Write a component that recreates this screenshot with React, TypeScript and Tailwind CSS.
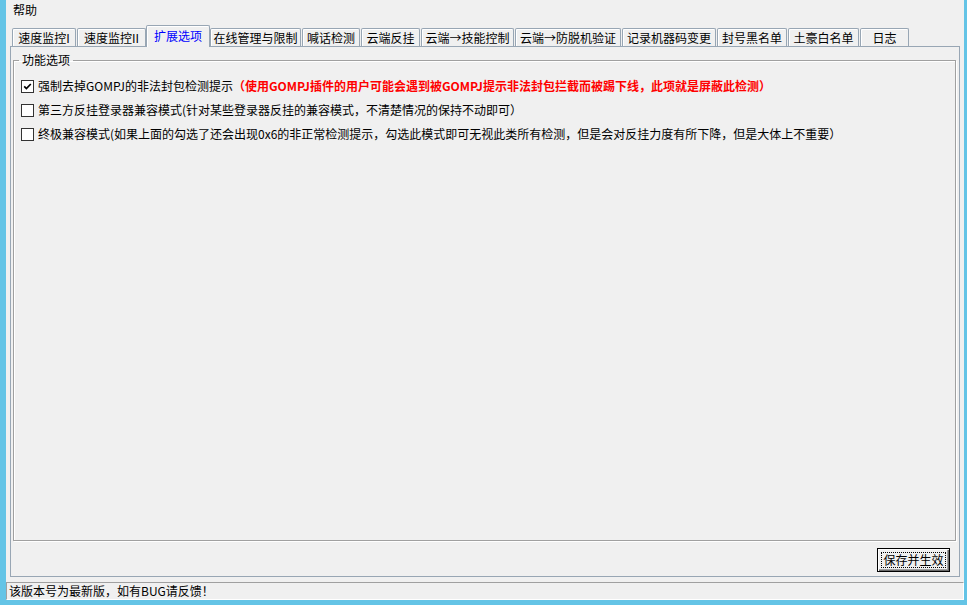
import React from "react";

const FONT = { fontFamily: '"Noto Sans CJK SC", "Noto Sans", sans-serif' };

type Tab = { label: string; cls: string; active?: boolean };

const tabs: Tab[] = [
  { label: "速度监控I", cls: "w-[64px] ml-[6px]" },
  { label: "速度监控II", cls: "w-[69px] ml-[1px]" },
  { label: "扩展选项", cls: "w-[64px] ml-0", active: true },
  { label: "在线管理与限制", cls: "w-[91px] ml-0" },
  { label: "喊话检测", cls: "w-[58px] ml-[1px]" },
  { label: "云端反挂", cls: "w-[59px] ml-[1px]" },
  { label: "云端→技能控制", cls: "w-[93px] ml-[1px]" },
  { label: "云端→防脱机验证", cls: "w-[106px] ml-[1px]" },
  { label: "记录机器码变更", cls: "w-[94px] ml-[1px]" },
  { label: "封号黑名单", cls: "w-[70px] ml-[1px]" },
  { label: "土豪白名单", cls: "w-[71px] ml-[1px]" },
  { label: "日志", cls: "w-[49px] ml-[1px]" },
];

function CheckBox({ checked }: { checked?: boolean }) {
  return (
    <span className="w-[13px] h-[13px] border border-[#333333] bg-white flex items-center justify-center shrink-0">
      {checked && (
        <svg width="11" height="11" viewBox="0 0 11 11">
          <path d="M2.2 5.4 L4.4 7.6 L8.8 3.0" stroke="#000" strokeWidth="1.7" fill="none" />
        </svg>
      )}
    </span>
  );
}

export default function App() {
  return (
    <div
      className="w-[967px] h-[605px] bg-[#64c4e6] pl-[6px] pr-[3px] pb-[5px] overflow-hidden text-[12px] text-black"
      style={FONT}
    >
      <div className="w-full h-full bg-[#f0f0f0] flex flex-col">
        {/* menu */}
        <div className="h-[25px] pl-[7px] pt-[2px] leading-[16px]">帮助</div>

        {/* tabs */}
        <div className="h-[21px] flex items-end relative z-10">
          {tabs.map((t) =>
            t.active ? (
              <div
                key={t.label}
                className={`${t.cls} h-[22px] mb-[-1px] border border-b-0 border-[#98a6b4] rounded-t-[2px] bg-[#f0f0f0] shadow-[inset_1px_1px_0_#ffffff] flex items-center justify-center text-[#0000ff] leading-[14px] pb-[2px]`}
              >
                {t.label}
              </div>
            ) : (
              <div
                key={t.label}
                className={`${t.cls} h-[18px] border border-b-0 border-[#98a6b4] rounded-t-[2px] bg-[#f0f0f0] shadow-[inset_1px_1px_0_#ffffff] flex items-center justify-center leading-[14px] pt-[1px]`}
              >
                {t.label}
              </div>
            )
          )}
        </div>

        {/* panel */}
        <div className="ml-[4px] w-[950px] h-[531px] border border-[#98a6b4] flex flex-col">
          <fieldset className="mt-[5px] ml-[2px] mr-[3px] flex-1 border border-[#a0a0a0] shadow-[inset_1px_1px_0_#ffffff,1px_1px_0_#ffffff] min-h-0">
            <legend className="ml-[5px] px-[3px] leading-[16px]">功能选项</legend>
            <div className="pl-[7px] pt-[6px] flex flex-col">
              <div className="h-[24px] flex items-center gap-[4px]">
                <CheckBox checked />
                <span className="leading-[14px] whitespace-nowrap">
                  强制去掉GOMPJ的非法封包检测提示
                  <span className="text-[#ff0000] font-bold">
                    （使用GOMPJ插件的用户可能会遇到被GOMPJ提示非法封包拦截而被踢下线，此项就是屏蔽此检测）
                  </span>
                </span>
              </div>
              <div className="h-[24px] flex items-center gap-[4px]">
                <CheckBox />
                <span className="leading-[14px] whitespace-nowrap">
                  第三方反挂登录器兼容模式(针对某些登录器反挂的兼容模式，不清楚情况的保持不动即可）
                </span>
              </div>
              <div className="h-[24px] flex items-center gap-[4px]">
                <CheckBox />
                <span className="leading-[14px] whitespace-nowrap">
                  终极兼容模式(如果上面的勾选了还会出现0x6的非正常检测提示，勾选此模式即可无视此类所有检测，但是会对反挂力度有所下降，但是大体上不重要）
                </span>
              </div>
            </div>
          </fieldset>
          <div className="h-[24px] mt-[7px] mb-[4px] flex justify-end pr-[9px]">
            <button className="w-[73px] h-[24px] border border-[#000000] bg-[#f0f0f0] shadow-[inset_1px_1px_0_#ffffff,inset_-1px_-1px_0_#696969,inset_-2px_-2px_0_#a0a0a0] p-[3px] flex">
              <span className="flex-1 border border-dotted border-black flex items-center justify-center leading-[14px] text-[12px]">
                保存并生效
              </span>
            </button>
          </div>
        </div>

        {/* status bar */}
        <div className="mt-[5px] h-[18px] border-t border-l border-[#a0a0a0] border-b border-r border-b-white border-r-white pl-[2px] flex items-center leading-[14px]">
          该版本号为最新版，如有BUG请反馈！
        </div>
      </div>
    </div>
  );
}
